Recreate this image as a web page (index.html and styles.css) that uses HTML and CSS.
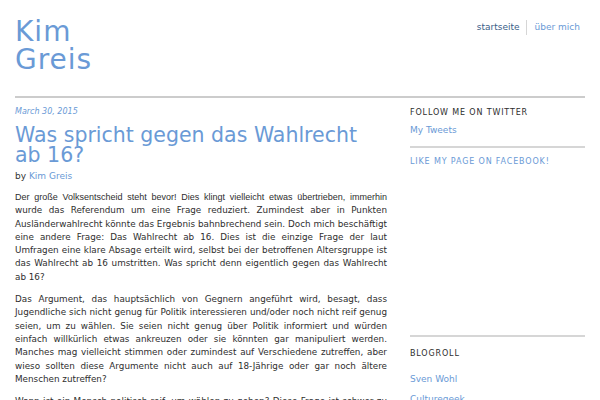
FILE: index.html
```html
<!DOCTYPE html>
<html lang="de">
<head>
<meta charset="utf-8">
<title>Kim Greis</title>
<link rel="stylesheet" href="styles.css">
</head>
<body>
<div class="page">
  <header class="site-header">
    <h1 class="site-title"><a href="#"><span class="title-line">Kim</span><span class="title-line">Greis</span></a></h1>
    <nav class="site-nav">
      <a class="nav-item current" href="#">startseite</a>
      <a class="nav-item" href="#">über mich</a>
    </nav>
  </header>
  <div class="layout">
    <main class="content">
      <div class="post-date">March 30, 2015</div>
      <h2 class="post-title">Was spricht gegen das Wahlrecht ab 16?</h2>
      <div class="byline">by <a href="#">Kim Greis</a></div>
      <div class="post-body">
        <p><span class="arial">Der große Volksentscheid steht bevor! Dies klingt vielleicht etwas übertrieben, immerhin</span> wurde das Referendum um eine Frage reduziert. Zumindest aber in Punkten Ausländerwahlrecht könnte das Ergebnis bahnbrechend sein. Doch mich beschäftigt eine andere Frage: Das Wahlrecht ab 16. Dies ist die einzige Frage der laut Umfragen eine klare Absage erteilt wird, selbst bei der betroffenen Altersgruppe ist das Wahlrecht ab 16 umstritten. Was spricht denn eigentlich gegen das Wahlrecht ab 16?</p>
        <p>Das Argument, das hauptsächlich von Gegnern angeführt wird, besagt, dass Jugendliche sich nicht genug für Politik interessieren und/oder noch nicht reif genug seien, um zu wählen. Sie seien nicht genug über Politik informiert und würden einfach willkürlich etwas ankreuzen oder sie könnten gar manipuliert werden. Manches mag vielleicht stimmen oder zumindest auf Verschiedene zutreffen, aber wieso sollten diese Argumente nicht auch auf 18-Jährige oder gar noch ältere Menschen zutreffen?</p>
        <p>Wann ist ein Mensch politisch reif, um wählen zu gehen? Diese Frage ist schwer zu beantworten und wird wohl nie eindeutig geklärt werden können.</p>
      </div>
    </main>
    <aside class="sidebar">
      <section class="widget widget-twitter">
        <h3 class="widget-title">Follow me on Twitter</h3>
        <a class="widget-link" href="#">My Tweets</a>
      </section>
      <section class="widget widget-facebook">
        <a class="widget-title link" href="#">Like my page on Facebook!</a>
      </section>
      <section class="widget widget-blogroll">
        <h3 class="widget-title">Blogroll</h3>
        <ul class="blogroll">
          <li><a href="#">Sven Wohl</a></li>
          <li><a href="#">Culturegeek</a></li>
        </ul>
      </section>
    </aside>
  </div>
</div>
</body>
</html>
```
FILE: styles.css
```css
html, body {
  margin: 0;
  padding: 0;
  background: #ffffff;
}
body {
  font-family: "DejaVu Sans", Verdana, sans-serif;
  color: #333333;
  overflow: hidden;
}
a {
  color: #6a9ad6;
  text-decoration: none;
}
.page {
  margin: 0 15px;
}
.site-header {
  display: flex;
  justify-content: space-between;
  align-items: flex-start;
  height: 78px;
  padding-top: 18px;
  border-bottom: 2px solid #cccccc;
}
.site-title {
  margin: 0;
  font-size: 28px;
  line-height: 28px;
  font-weight: normal;
  letter-spacing: 1px;
}
.site-title a {
  color: #6a9ad6;
}
.title-line {
  display: block;
  height: 28px;
}
.site-nav {
  display: flex;
  margin-top: 2px;
  padding-right: 5px;
}
.nav-item {
  font-size: 9px;
  line-height: 15px;
  color: #6a9ad6;
}
.nav-item.current {
  color: #3a5e88;
  padding-right: 6px;
}
.nav-item + .nav-item {
  border-left: 1px solid #d6d6d6;
  padding-left: 8px;
}
.layout {
  display: grid;
  grid-template-columns: 372px 175px;
  column-gap: 23px;
}
.content {
  padding-top: 8px;
}
.post-date {
  font-size: 8px;
  line-height: 12px;
  font-style: italic;
  color: #6a9ad6;
}
.post-title {
  margin: 7px 0 0;
  font-size: 20.5px;
  line-height: 20px;
  font-weight: normal;
  color: #6a9ad6;
}
.byline {
  margin-top: 5px;
  font-size: 9px;
  line-height: 13px;
  color: #333333;
}
.post-body {
  margin-top: 8px;
  font-size: 8.8px;
  line-height: 13.3px;
  text-align: justify;
  color: #2e2e2e;
}
.post-body p {
  margin: 0 0 9px;
}
.arial {
  font-family: "Liberation Sans", Arial, sans-serif;
  font-size: 9px;
}
.sidebar {
  padding-top: 9px;
}
.widget-title {
  display: block;
  margin: 0;
  font-size: 8px;
  line-height: 12px;
  font-weight: normal;
  text-transform: uppercase;
  letter-spacing: 0.85px;
  color: #2e2e2e;
}
.widget-title.link {
  color: #6a9ad6;
}
.widget-link {
  display: block;
  margin-top: 5px;
  font-size: 9px;
  line-height: 13px;
}
.widget-twitter {
  padding-bottom: 9px;
  border-bottom: 2px solid #d6d6d6;
}
.widget-facebook {
  padding-top: 8px;
  height: 189px;
  box-sizing: border-box;
  border-bottom: 2px solid #d6d6d6;
}
.widget-blogroll {
  padding-top: 11px;
}
.blogroll {
  list-style: none;
  margin: 9px 0 0;
  padding: 0;
}
.blogroll li {
  font-size: 9px;
  line-height: 20px;
}
```
